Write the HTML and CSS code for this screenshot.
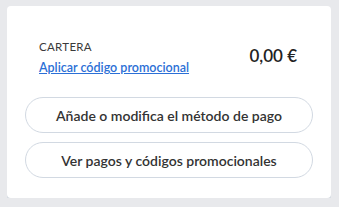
FILE: index.html
```html
<!DOCTYPE html>
<html lang="es">
<head>
<meta charset="utf-8">
<link rel="stylesheet" href="styles.css">
</head>
<body>
<div class="card">
  <div class="wallet">
    <div class="wallet-info">
      <div class="wallet-title">CARTERA</div>
      <a class="promo-link" href="#">Aplicar código promocional</a>
    </div>
    <div class="amount">0,00 €</div>
  </div>
  <div class="actions">
    <button class="pill">Añade o modifica el método de pago</button>
    <button class="pill">Ver pagos y códigos promocionales</button>
  </div>
</div>
</body>
</html>
```
FILE: styles.css
```css
html, body {
  margin: 0;
  padding: 0;
  background: #e8e9ec;
}
body {
  padding: 6px 8px 0 7px;
  font-family: Lato, "Noto Sans", sans-serif;
  color: #333;
}
.card {
  background: #fff;
  border-radius: 4px;
  box-shadow: 0 2px 0 #d3d9e0;
  padding: 34px 18px 20px 18px;
}
.wallet {
  display: flex;
  align-items: center;
  justify-content: space-between;
  padding: 0 16px 0 14px;
}
.wallet-title {
  font-size: 11.5px;
  letter-spacing: 0.3px;
  color: #3a3a3a;
  line-height: 14px;
}
.promo-link {
  display: block;
  margin-top: 6px;
  font-size: 12.5px;
  font-weight: 600;
  color: #2b6fd6;
  text-decoration: underline;
  line-height: 15px;
}
.amount {
  font-size: 17px;
  font-weight: 600;
  color: #222;
  margin-top: -4px;
}
.actions {
  display: flex;
  flex-direction: column;
  gap: 9px;
  margin-top: 22px;
}
.pill {
  height: 36px;
  border: 1px solid #d2d9e2;
  border-radius: 18px;
  background: #fff;
  font-family: Lato, "Noto Sans", sans-serif;
  font-size: 14px;
  font-weight: 600;
  color: #333;
  cursor: pointer;
}
```
